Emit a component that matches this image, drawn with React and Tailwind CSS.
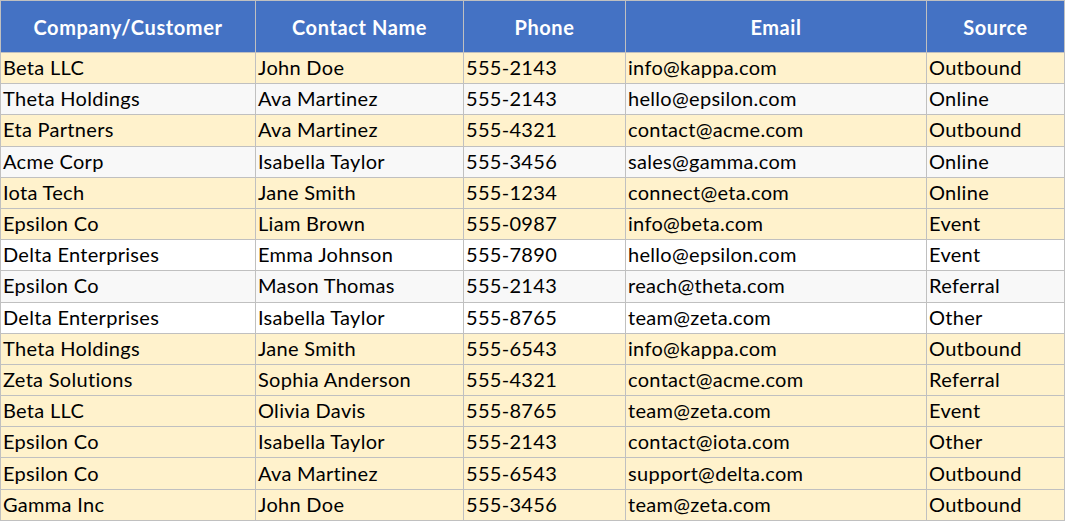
const rows = [
  ['Beta LLC', 'John Doe', '555-2143', 'info@kappa.com', 'Outbound', 'y'],
  ['Theta Holdings', 'Ava Martinez', '555-2143', 'hello@epsilon.com', 'Online', 'g'],
  ['Eta Partners', 'Ava Martinez', '555-4321', 'contact@acme.com', 'Outbound', 'y'],
  ['Acme Corp', 'Isabella Taylor', '555-3456', 'sales@gamma.com', 'Online', 'g'],
  ['Iota Tech', 'Jane Smith', '555-1234', 'connect@eta.com', 'Online', 'y'],
  ['Epsilon Co', 'Liam Brown', '555-0987', 'info@beta.com', 'Event', 'y'],
  ['Delta Enterprises', 'Emma Johnson', '555-7890', 'hello@epsilon.com', 'Event', 'w'],
  ['Epsilon Co', 'Mason Thomas', '555-2143', 'reach@theta.com', 'Referral', 'g'],
  ['Delta Enterprises', 'Isabella Taylor', '555-8765', 'team@zeta.com', 'Other', 'w'],
  ['Theta Holdings', 'Jane Smith', '555-6543', 'info@kappa.com', 'Outbound', 'y'],
  ['Zeta Solutions', 'Sophia Anderson', '555-4321', 'contact@acme.com', 'Referral', 'y'],
  ['Beta LLC', 'Olivia Davis', '555-8765', 'team@zeta.com', 'Event', 'y'],
  ['Epsilon Co', 'Isabella Taylor', '555-2143', 'contact@iota.com', 'Other', 'y'],
  ['Epsilon Co', 'Ava Martinez', '555-6543', 'support@delta.com', 'Outbound', 'y'],
  ['Gamma Inc', 'John Doe', '555-3456', 'team@zeta.com', 'Outbound', 'y'],
];

const headers = ['Company/Customer', 'Contact Name', 'Phone', 'Email', 'Source'];
const widths = ['w-[255px]', 'w-[208px]', 'w-[162px]', 'w-[301px]', 'w-[138px]'];

const rowBg = {
  y: 'bg-[#fff2cc]',
  g: 'bg-[#f8f8f8]',
  w: 'bg-white',
};

export default function App() {
  return (
    <div className="w-[1066px] h-[522px] bg-white font-['Lato','Noto_Sans',sans-serif]">
      <table className="w-[1064px] table-fixed border-collapse text-[20px] text-black">
        <colgroup>
          {widths.map((w, i) => (
            <col key={i} className={w} />
          ))}
        </colgroup>
        <thead>
          <tr className="h-[52px] bg-[#4472c4]">
            {headers.map((h) => (
              <th
                key={h}
                className="border border-[#c0c0c0] text-center font-bold text-white tracking-[0.6px]"
              >
                {h}
              </th>
            ))}
          </tr>
        </thead>
        <tbody>
          {rows.map((r, i) => (
            <tr key={i} className={`h-[31.2px] ${rowBg[r[5]]}`}>
              {r.slice(0, 5).map((c, j) => (
                <td
                  key={j}
                  className="border border-[#c0c0c0] px-[2px] pt-0 pb-[2px] leading-none whitespace-nowrap tracking-[0.3px]"
                >
                  {c}
                </td>
              ))}
            </tr>
          ))}
        </tbody>
      </table>
    </div>
  );
}
